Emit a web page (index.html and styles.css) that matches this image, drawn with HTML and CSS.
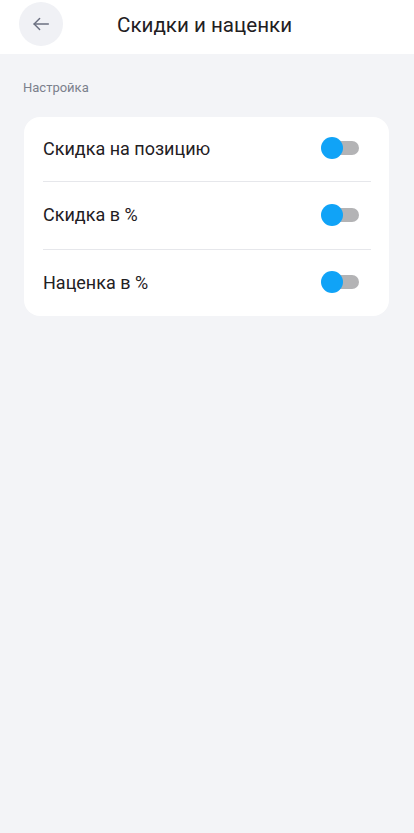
FILE: index.html
```html
<!DOCTYPE html>
<html lang="ru">
<head>
    <meta charset="UTF-8">
    <meta name="viewport" content="width=device-width, initial-scale=1.0">
    <title>Скидки и наценки</title>
    <link rel="stylesheet" href="styles.css">
</head>
<body>

<div class="header">
    <button class="back-btn" aria-label="Назад">
        <svg width="22" height="22" viewBox="0 0 24 24" fill="none" stroke="#6b7080" stroke-width="1.6" stroke-linecap="round" stroke-linejoin="round">
            <path d="M20 12H4.5"/>
            <path d="M10.5 6L4.5 12l6 6"/>
        </svg>
    </button>
    <h1>Скидки и наценки</h1>
</div>

<div class="content">
    <div class="section-title">Настройка</div>

    <div class="card">
        <div class="row">
            <span>Скидка на позицию</span>
            <span class="switch"><span class="track"></span><span class="knob"></span></span>
        </div>
        <div class="row">
            <span>Скидка в %</span>
            <span class="switch"><span class="track"></span><span class="knob"></span></span>
        </div>
        <div class="row">
            <span>Наценка в %</span>
            <span class="switch"><span class="track"></span><span class="knob"></span></span>
        </div>
    </div>
</div>

</body>
</html>
```

FILE: styles.css
```css
body {
    font-family: Roboto, "Noto Sans", Arial, sans-serif;
    background-color: #f3f4f7;
    margin: 0;
    padding: 0;
    color: #1f2023;
}
.header {
    height: 54px;
    background: #fff;
    display: flex;
    align-items: center;
    padding-left: 19px;
}
.back-btn {
    width: 44px;
    height: 44px;
    border: none;
    border-radius: 50%;
    background: #f0f1f5;
    display: flex;
    align-items: center;
    justify-content: center;
    padding: 0;
    margin-top: -6px;
}
.header h1 {
    margin: -5px 0 0 54px;
    font-size: 20.6px;
    font-weight: 400;
}
.content {
    padding: 0 25px 0 24px;
}
.section-title {
    font-size: 13px;
    color: #7b808c;
    margin-left: -1px;
    padding-top: 26px;
    height: 63px;
    box-sizing: border-box;
}
.card {
    background: #fff;
    border-radius: 16px;
    padding: 0 18px 0 19px;
}
.row {
    box-sizing: border-box;
    height: 68px;
    padding-bottom: 2px;
    display: flex;
    align-items: center;
    justify-content: space-between;
    font-size: 18px;
    border-bottom: 1px solid #e6e7eb;
}
.row:first-child {
    height: 65px;
}
.row:last-child {
    border-bottom: none;
    height: 66px;
}
.switch {
    position: relative;
    width: 38px;
    height: 22px;
    margin-right: 12px;
}
.track {
    position: absolute;
    right: 0;
    top: 4px;
    width: 30px;
    height: 14px;
    border-radius: 7px;
    background: #b3b3b5;
}
.knob {
    position: absolute;
    left: 0;
    top: 0;
    width: 22px;
    height: 22px;
    border-radius: 50%;
    background: #10a3f7;
}
```
